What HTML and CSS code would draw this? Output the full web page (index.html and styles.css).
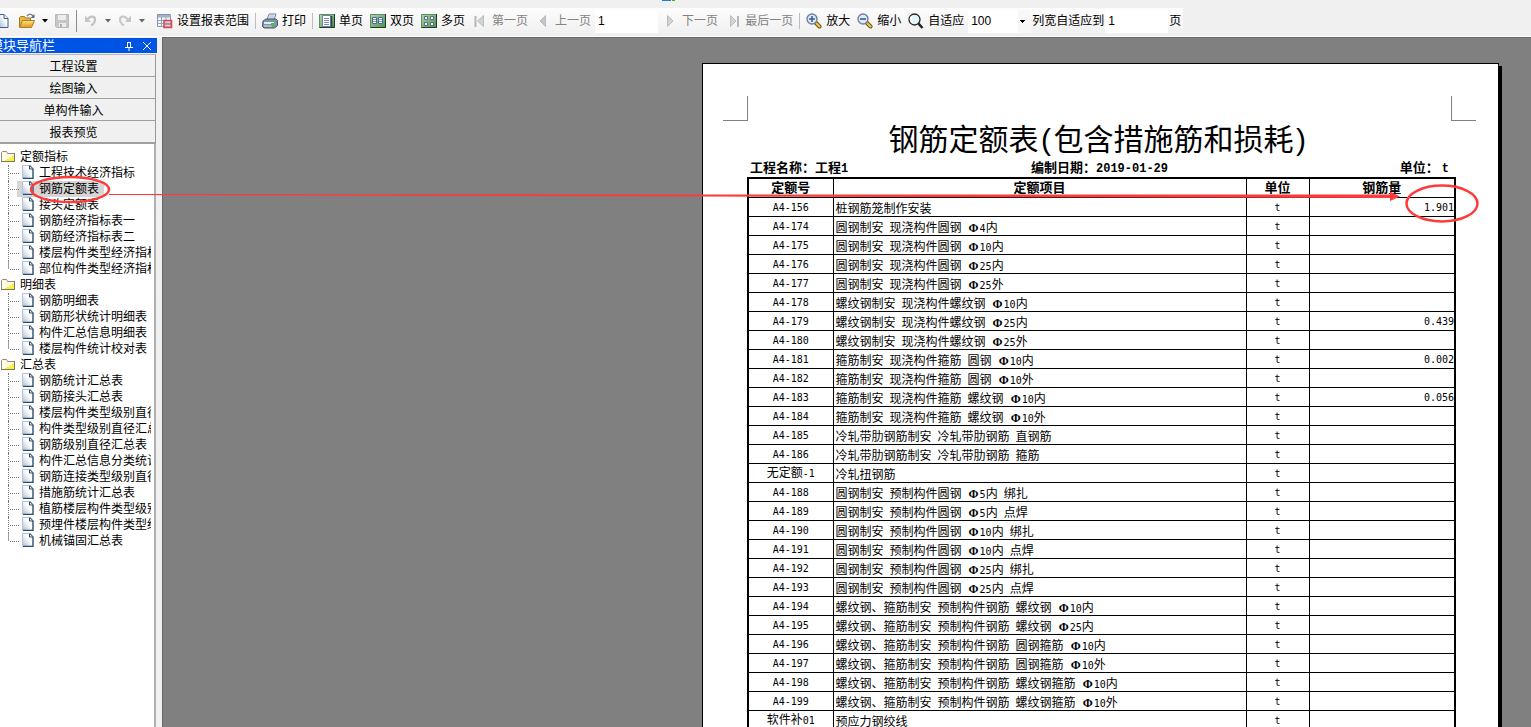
FILE: index.html
```
<!DOCTYPE html>
<html lang="zh-CN">
<head>
<meta charset="utf-8">
<title>报表预览</title>
<link rel="stylesheet" href="styles.css">
</head>
<body>
<svg class="defs" width="0" height="0" aria-hidden="true">
  <defs>
    <linearGradient id="paper" x1="1" y1="0" x2="0" y2="1"><stop offset="0.4" stop-color="#fff"/><stop offset="1" stop-color="#a9bfd9"/></linearGradient>
    <linearGradient id="gold" x1="0" y1="0" x2="0" y2="1"><stop offset="0" stop-color="#fbe08a"/><stop offset="1" stop-color="#dd9a1c"/></linearGradient>
    <linearGradient id="green" x1="0" y1="0" x2="1" y2="1"><stop offset="0" stop-color="#b3d6ac"/><stop offset="1" stop-color="#4c8f4c"/></linearGradient>
    <symbol id="file" viewBox="0 0 12 14"><path d="M.5.5h7l3 3v10H.5z" fill="url(#paper)"/><path d="M.5 13V.5h7" fill="none" stroke="#b4c2d6"/><path d="M7.500.5l3.500 3.500v9.500H1" fill="none" stroke="#2f4c6b" stroke-width="1.400"/><path d="M7.500 1v3H11" fill="#dce7f3" stroke="#2f4c6b"/></symbol>
    <symbol id="folder" viewBox="0 0 16 14"><path d="M1.500 12.500v-9l1-1h4l1 2h7v8z" fill="#fffde8" stroke="#8b8b8b"/><path d="M14 6v6H4z" fill="#ffef28"/><path d="M5 10l1 1m1-3l3 3m-1-4l4 4" stroke="#fff" stroke-dasharray="1 1"/><path d="M1 12.500h14M14.500 4v9" stroke="#77776a"/></symbol>
    <symbol id="lens" viewBox="0 0 16 16"><path d="M9.500 9.500l4 4" stroke="#58481f" stroke-width="4" stroke-linecap="round"/><path d="M10.500 10.500l3 3" stroke="#f0c33e" stroke-width="2.400" stroke-linecap="round"/><circle cx="6" cy="6" r="5" fill="#dcecff" stroke="#747f93" stroke-width="1.400"/></symbol>
  </defs>
</svg>

<header class="toolbar">
  <div class="bar bar-file">
    <button class="tool" aria-label="新建"><svg width="12" height="16"><path d="M0 1.500h4l4 4v9H0" fill="url(#paper)" stroke="#405f86"/><path d="M4 1.500v4h4" fill="#e8f0fa" stroke="#405f86"/></svg></button>
    <button class="tool" aria-label="打开"><svg width="18" height="16"><path d="M1.500 14V4.500l1-1h4l1 1.500h5V8" fill="#e7b54a" stroke="#a87924"/><path d="M1.500 14.500l3-7h12l-3 7z" fill="url(#gold)" stroke="#b57c18"/><path d="M9 3c2-2.500 4-2.500 6 0" fill="none" stroke="#71849c" stroke-width="1.400"/><path d="M16.500 1v4h-4z" fill="#586f8f"/></svg></button>
    <button class="tool" aria-label="打开选项"><svg width="6" height="4"><path d="M0 0h6L3 3.500z"/></svg></button>
    <button class="tool" aria-label="保存" disabled><svg width="16" height="16"><path d="M1.500 1.500h13v13h-12l-1-1z" fill="#c6c6c6" stroke="#b9b9b9"/><path d="M4 2h8v5H4zM5 10h7v4H5z" fill="#ececec"/><path d="M6 11h2v3H6z" fill="#b0b0b0"/></svg></button>
    <span class="sep sep-tall"></span>
    <button class="tool" aria-label="撤销" disabled><svg width="16" height="16"><path d="M4 7c3-5 8-4 8-.5 0 2.500-1.500 4.500-4 6" fill="none" stroke="#c4c4c4" stroke-width="2.200"/><path d="M2 2.500v6.500h6z" fill="#c6c6c6"/></svg></button>
    <button class="tool" aria-label="撤销选项"><svg width="6" height="4"><path d="M0 0h6L3 3.500z" fill="#666"/></svg></button>
    <button class="tool" aria-label="重做" disabled><svg width="16" height="16"><path d="M11 7C8 2 3 3 3 6.500 3 9 4.500 11 7 12.500" fill="none" stroke="#cacaca" stroke-width="2.200"/><path d="M14 2.500V9H8z" fill="#c6c6c6"/></svg></button>
    <button class="tool" aria-label="重做选项"><svg width="6" height="4"><path d="M0 0h6L3 3.500z" fill="#666"/></svg></button>
  </div>
  <div class="bar bar-report">
    <button class="tool labelled"><svg width="16" height="16"><path d="M.5 1.500h13v12H.5z" fill="#f2f6fb" stroke="#8895a8"/><path d="M1 2h12.500v2.500H1z" fill="#9fb2cc"/><path d="M1 7.500h12M1 10.500h12M4.500 4v10M9 4v10" stroke="#94a5bb"/><path d="M7 7.500h7.500v7H7z" fill="#b9c8df" fill-opacity=".7" stroke="#d94a4a" stroke-width="1.600"/><path d="M8 11h6" stroke="#d94a4a"/></svg>设置报表范围</button>
    <span class="sep"></span>
    <button class="tool labelled"><svg width="16" height="16"><path d="M5 7l2-6h7l-2 6z" fill="#f5f9ff" stroke="#6d7f97"/><path d="M7.500 3h5m-5.500 2h5" stroke="#9aacc3"/><path d="M1 8l3-2h10l1.500 1.500v5l-3 2.500H2l-1.500-1.500z" fill="#8293a8" stroke="#44566c"/><path d="M2 9h10v2H2z" fill="#e5ebf2"/><path d="M2 13h8" stroke="#dfe6ee"/><path d="M9 10h3v3H9z" fill="#35cf35"/></svg>打印</button>
    <span class="sep"></span>
    <button class="tool labelled"><svg width="16" height="16"><path d="M.5 1.500h15v13H.5z" fill="url(#green)" stroke="#5d8f66"/><path d="M15.500 1v13.500H.5" fill="none" stroke="#1d3d2a"/><path d="M3.500 2.500h8v11h-8z" fill="#fff" stroke="#6f839b"/><path d="M5 5.500h5M5 7.500h5M5 9.500h5M5 11.500h5" stroke="#7788bd"/><path d="M12.500 3v11" stroke="#284557" stroke-width="1.500"/></svg>单页</button>
    <button class="tool labelled"><svg width="16" height="16"><path d="M.5 1.500h15v13H.5z" fill="url(#green)" stroke="#5d8f66"/><path d="M15.500 1v13.500H.5" fill="none" stroke="#1d3d2a"/><path d="M2.500 4.500h4v6h-4zM8.500 4.500h4v6h-4z" fill="#fff" stroke="#47679a"/><path d="M3 6.500h3m-3 2h3m3-2h3m-3 2h3" stroke="#7c93bc"/></svg>双页</button>
    <button class="tool labelled"><svg width="16" height="16"><path d="M.5 1.500h15v13H.5z" fill="url(#green)" stroke="#5d8f66"/><path d="M15.500 1v13.500H.5" fill="none" stroke="#1d3d2a"/><path d="M3.500 3.500h3v3h-3zM9.500 3.500h3v3h-3zM3.500 9.500h3v3h-3zM9.500 9.500h3v3h-3z" fill="#fff" stroke="#526d83"/></svg>多页</button>
    <button class="tool labelled" disabled><svg width="16" height="16"><path d="M3.500 3v11" stroke="#b7b7b7" stroke-width="2"/><path d="M11.500 2.500v11L5.500 8z" fill="#d3d3d3" stroke="#bcbcbc"/></svg>第一页</button>
    <button class="tool labelled" disabled><svg width="16" height="16"><path d="M10.500 2.500v11L5 8z" fill="#c5c5c5" stroke="#bcbcbc"/></svg>上一页</button>
    <input class="field" type="text" value="1" aria-label="当前页">
    <button class="tool labelled" disabled><svg width="16" height="16"><path d="M5.500 2.500v11L11 8z" fill="#d3d3d3" stroke="#bcbcbc"/></svg>下一页</button>
    <button class="tool labelled" disabled><svg width="16" height="16"><path d="M5.500 2.500v11L11 8z" fill="#d3d3d3" stroke="#bcbcbc"/><path d="M13 3v11" stroke="#b7b7b7" stroke-width="2"/></svg>最后一页</button>
    <span class="sep"></span>
    <button class="tool labelled"><svg width="16" height="16"><use href="#lens"/><path d="M3 6h6M6 3v6" stroke="#3c5e98" stroke-width="1.600"/></svg>放大</button>
    <button class="tool labelled"><svg width="16" height="16"><use href="#lens"/><path d="M3 6h6" stroke="#3c5e98" stroke-width="1.600"/></svg>缩小</button>
    <button class="tool labelled"><svg width="16" height="16"><path d="M10 10l4.500 5" stroke="#222" stroke-width="2.600"/><circle cx="6.500" cy="6.500" r="5.500" fill="#e2f4fc" stroke="#222" stroke-width="1.300"/><path d="M4 3.500c-2 2-1.500 4 0 6" stroke="#fff" stroke-width="2" fill="none"/></svg>自适应</button>
    <select class="field zoom" aria-label="缩放比例"><option>100</option></select>
    <label for="fit">列宽自适应到</label>
    <input class="field" id="fit" type="text" value="1">
    <label for="fit">页</label>
  </div>
</header>

<div class="workspace">
  <aside class="sidebar">
    <div class="side-title">
      <span class="side-name">模块导航栏</span>
      <button class="tool" aria-label="固定"><svg width="10" height="10"><path d="M3.500 1v5M3 1.500h4M6.500 1v5M1 6.500h8M5 7v3" stroke="#fff" fill="none"/></svg></button>
      <button class="tool" aria-label="关闭"><svg width="10" height="10"><path d="M1 1l8 8M9 1L1 9" stroke="#fff"/></svg></button>
    </div>
    <nav class="modules">
      <button>工程设置</button>
      <button>绘图输入</button>
      <button>单构件输入</button>
      <button>报表预览</button>
    </nav>
    <div class="tree">
      <div class="folder"><svg width="16" height="14"><use href="#folder"/></svg>定额指标</div>
      <ul>
        <li><a href="#"><svg width="12" height="14"><use href="#file"/></svg><span>工程技术经济指标</span></a></li>
        <li class="selected"><a href="#"><svg width="12" height="14"><use href="#file"/></svg><span>钢筋定额表</span></a></li>
        <li><a href="#"><svg width="12" height="14"><use href="#file"/></svg><span>接头定额表</span></a></li>
        <li><a href="#"><svg width="12" height="14"><use href="#file"/></svg><span>钢筋经济指标表一</span></a></li>
        <li><a href="#"><svg width="12" height="14"><use href="#file"/></svg><span>钢筋经济指标表二</span></a></li>
        <li><a href="#"><svg width="12" height="14"><use href="#file"/></svg><span>楼层构件类型经济指标</span></a></li>
        <li><a href="#"><svg width="12" height="14"><use href="#file"/></svg><span>部位构件类型经济指标</span></a></li>
      </ul>
      <div class="folder"><svg width="16" height="14"><use href="#folder"/></svg>明细表</div>
      <ul>
        <li><a href="#"><svg width="12" height="14"><use href="#file"/></svg><span>钢筋明细表</span></a></li>
        <li><a href="#"><svg width="12" height="14"><use href="#file"/></svg><span>钢筋形状统计明细表</span></a></li>
        <li><a href="#"><svg width="12" height="14"><use href="#file"/></svg><span>构件汇总信息明细表</span></a></li>
        <li><a href="#"><svg width="12" height="14"><use href="#file"/></svg><span>楼层构件统计校对表</span></a></li>
      </ul>
      <div class="folder"><svg width="16" height="14"><use href="#folder"/></svg>汇总表</div>
      <ul>
        <li><a href="#"><svg width="12" height="14"><use href="#file"/></svg><span>钢筋统计汇总表</span></a></li>
        <li><a href="#"><svg width="12" height="14"><use href="#file"/></svg><span>钢筋接头汇总表</span></a></li>
        <li><a href="#"><svg width="12" height="14"><use href="#file"/></svg><span>楼层构件类型级别直径</span></a></li>
        <li><a href="#"><svg width="12" height="14"><use href="#file"/></svg><span>构件类型级别直径汇总</span></a></li>
        <li><a href="#"><svg width="12" height="14"><use href="#file"/></svg><span>钢筋级别直径汇总表</span></a></li>
        <li><a href="#"><svg width="12" height="14"><use href="#file"/></svg><span>构件汇总信息分类统计</span></a></li>
        <li><a href="#"><svg width="12" height="14"><use href="#file"/></svg><span>钢筋连接类型级别直径</span></a></li>
        <li><a href="#"><svg width="12" height="14"><use href="#file"/></svg><span>措施筋统计汇总表</span></a></li>
        <li><a href="#"><svg width="12" height="14"><use href="#file"/></svg><span>植筋楼层构件类型级别</span></a></li>
        <li><a href="#"><svg width="12" height="14"><use href="#file"/></svg><span>预埋件楼层构件类型级</span></a></li>
        <li><a href="#"><svg width="12" height="14"><use href="#file"/></svg><span>机械锚固汇总表</span></a></li>
      </ul>
    </div>
  </aside>

  <main class="preview">
    <article class="page">
      <div class="crops"><span class="crop crop-left"></span><span class="crop crop-right"></span></div>
      <h1>钢筋定额表<span class="paren">(</span>包含措施筋和损耗<span class="paren">)</span></h1>
      <div class="meta"><span>工程名称：工程<span class="latin">1</span></span><span>编制日期：<span class="latin">2019-01-29</span></span><span class="meta-end">单位：<span class="latin unit">t</span></span></div>
      <table>
        <colgroup><col class="c-code"><col><col class="c-unit"><col class="c-qty"></colgroup>
        <thead><tr><th>定额号</th><th>定额项目</th><th>单位</th><th>钢筋量</th></tr></thead>
        <tbody>
          <tr><td>A4-156</td><td>桩钢筋笼制作安装</td><td>t</td><td>1.901</td></tr>
          <tr><td>A4-174</td><td>圆钢制安<i> </i>现浇构件圆钢<i> </i><b>Φ</b><i>4</i>内</td><td>t</td><td></td></tr>
          <tr><td>A4-175</td><td>圆钢制安<i> </i>现浇构件圆钢<i> </i><b>Φ</b><i>10</i>内</td><td>t</td><td></td></tr>
          <tr><td>A4-176</td><td>圆钢制安<i> </i>现浇构件圆钢<i> </i><b>Φ</b><i>25</i>内</td><td>t</td><td></td></tr>
          <tr><td>A4-177</td><td>圆钢制安<i> </i>现浇构件圆钢<i> </i><b>Φ</b><i>25</i>外</td><td>t</td><td></td></tr>
          <tr><td>A4-178</td><td>螺纹钢制安<i> </i>现浇构件螺纹钢<i> </i><b>Φ</b><i>10</i>内</td><td>t</td><td></td></tr>
          <tr><td>A4-179</td><td>螺纹钢制安<i> </i>现浇构件螺纹钢<i> </i><b>Φ</b><i>25</i>内</td><td>t</td><td>0.439</td></tr>
          <tr><td>A4-180</td><td>螺纹钢制安<i> </i>现浇构件螺纹钢<i> </i><b>Φ</b><i>25</i>外</td><td>t</td><td></td></tr>
          <tr><td>A4-181</td><td>箍筋制安<i> </i>现浇构件箍筋<i> </i>圆钢<i> </i><b>Φ</b><i>10</i>内</td><td>t</td><td>0.002</td></tr>
          <tr><td>A4-182</td><td>箍筋制安<i> </i>现浇构件箍筋<i> </i>圆钢<i> </i><b>Φ</b><i>10</i>外</td><td>t</td><td></td></tr>
          <tr><td>A4-183</td><td>箍筋制安<i> </i>现浇构件箍筋<i> </i>螺纹钢<i> </i><b>Φ</b><i>10</i>内</td><td>t</td><td>0.056</td></tr>
          <tr><td>A4-184</td><td>箍筋制安<i> </i>现浇构件箍筋<i> </i>螺纹钢<i> </i><b>Φ</b><i>10</i>外</td><td>t</td><td></td></tr>
          <tr><td>A4-185</td><td>冷轧带肋钢筋制安<i> </i>冷轧带肋钢筋<i> </i>直钢筋</td><td>t</td><td></td></tr>
          <tr><td>A4-186</td><td>冷轧带肋钢筋制安<i> </i>冷轧带肋钢筋<i> </i>箍筋</td><td>t</td><td></td></tr>
          <tr><td><span class="han">无定额</span>-1</td><td>冷轧扭钢筋</td><td>t</td><td></td></tr>
          <tr><td>A4-188</td><td>圆钢制安<i> </i>预制构件圆钢<i> </i><b>Φ</b><i>5</i>内<i> </i>绑扎</td><td>t</td><td></td></tr>
          <tr><td>A4-189</td><td>圆钢制安<i> </i>预制构件圆钢<i> </i><b>Φ</b><i>5</i>内<i> </i>点焊</td><td>t</td><td></td></tr>
          <tr><td>A4-190</td><td>圆钢制安<i> </i>预制构件圆钢<i> </i><b>Φ</b><i>10</i>内<i> </i>绑扎</td><td>t</td><td></td></tr>
          <tr><td>A4-191</td><td>圆钢制安<i> </i>预制构件圆钢<i> </i><b>Φ</b><i>10</i>内<i> </i>点焊</td><td>t</td><td></td></tr>
          <tr><td>A4-192</td><td>圆钢制安<i> </i>预制构件圆钢<i> </i><b>Φ</b><i>25</i>内<i> </i>绑扎</td><td>t</td><td></td></tr>
          <tr><td>A4-193</td><td>圆钢制安<i> </i>预制构件圆钢<i> </i><b>Φ</b><i>25</i>内<i> </i>点焊</td><td>t</td><td></td></tr>
          <tr><td>A4-194</td><td>螺纹钢、箍筋制安<i> </i>预制构件钢筋<i> </i>螺纹钢<i> </i><b>Φ</b><i>10</i>内</td><td>t</td><td></td></tr>
          <tr><td>A4-195</td><td>螺纹钢、箍筋制安<i> </i>预制构件钢筋<i> </i>螺纹钢<i> </i><b>Φ</b><i>25</i>内</td><td>t</td><td></td></tr>
          <tr><td>A4-196</td><td>螺纹钢、箍筋制安<i> </i>预制构件钢筋<i> </i>圆钢箍筋<i> </i><b>Φ</b><i>10</i>内</td><td>t</td><td></td></tr>
          <tr><td>A4-197</td><td>螺纹钢、箍筋制安<i> </i>预制构件钢筋<i> </i>圆钢箍筋<i> </i><b>Φ</b><i>10</i>外</td><td>t</td><td></td></tr>
          <tr><td>A4-198</td><td>螺纹钢、箍筋制安<i> </i>预制构件钢筋<i> </i>螺纹钢箍筋<i> </i><b>Φ</b><i>10</i>内</td><td>t</td><td></td></tr>
          <tr><td>A4-199</td><td>螺纹钢、箍筋制安<i> </i>预制构件钢筋<i> </i>螺纹钢箍筋<i> </i><b>Φ</b><i>10</i>外</td><td>t</td><td></td></tr>
          <tr><td><span class="han">软件补</span>01</td><td>预应力钢绞线</td><td>t</td><td></td></tr>
        </tbody>
      </table>
    </article>
  </main>
</div>

<svg class="marks" viewBox="0 0 1531 727" aria-hidden="true">
  <path d="M662 0h9v1h-9z" fill="#1d7fc4"/><path d="M672 0h3v1h-3z" fill="#4da52f"/>
  <g fill="none" stroke="#fd3b3b" stroke-width="2.500"><ellipse cx="70" cy="189.500" rx="39" ry="12.500"/><ellipse cx="1442" cy="203.500" rx="35.500" ry="18"/></g>
  <path d="M109 194L700 194.500 1390 194.500V191.500L1400 196.500 1390 201V198L700 196.500 109 195z" fill="#fd3b3b"/>
</svg>
</body>
</html>
```
FILE: styles.css
```
* { box-sizing: border-box; }

body {
  margin: 0;
  height: 100vh;
  display: flex;
  flex-direction: column;
  overflow: hidden;
  background: #f0f0f0;
  color: #000;
  font: 12px/16px "Liberation Sans", "Noto Sans CJK SC", sans-serif;
}

svg { display: block; flex: none; }
.defs { position: absolute; }

button, input, select { font: inherit; color: inherit; border: 0; border-radius: 0; margin: 0; }

/* toolbar */
.toolbar {
  flex: none;
  display: flex;
  padding-top: 8px;
  height: 37px;
  border-bottom: 1px solid #fff;
  white-space: nowrap;
}
.bar {
  display: flex;
  align-items: center;
  padding-bottom: 2px;
  background: linear-gradient(#fdfdfd, #efefef);
}
.bar-file { gap: 6px; width: 153px; }
.bar-report { gap: 1px; padding-left: 1px; padding-right: 2px; }
.tool { display: flex; align-items: center; padding: 0; background: none; }
.tool:disabled { color: #838383; }
.labelled { gap: 4px; padding: 0 3px; }
.sep { width: 1px; height: 16px; margin: 0 2px; background: #bdbdbd; }
.sep-tall { height: 22px; margin: 0; background: #8d8d8d; }
.field { width: 63px; height: 23px; padding: 0 3px; background: #fff; }
.zoom {
  appearance: none;
  background:
    linear-gradient(#000, #000) 52px 10px / 5px 1px no-repeat,
    linear-gradient(#000, #000) 53px 11px / 3px 1px no-repeat,
    linear-gradient(#000, #000) 54px 12px / 1px 1px no-repeat,
    linear-gradient(90deg, #fff 50px, #f8f8f8 50px);
}

/* workspace */
.workspace { flex: 1; min-height: 0; display: flex; }
.sidebar {
  flex: none;
  width: 157px;
  display: flex;
  flex-direction: column;
  padding-top: 1px;
}
.side-title {
  display: flex;
  align-items: center;
  gap: 8px;
  height: 15px;
  padding-right: 5px;
  overflow: hidden;
  background: #0054e3;
  color: #fff;
  font-size: 13px;
  line-height: 15px;
}
.side-name { flex: 1; margin-left: -10px; }
.modules {
  display: flex;
  flex-direction: column;
  margin: 1px 1px 0 0;
  border-top: 1px solid #b8b8b8;
  border-right: 1px solid #999;
}
.modules button {
  height: 22px;
  padding: 2px 8px 0 0;
  border-bottom: 1px solid #a0a0a0;
  background: #f0f0f0;
}
.tree {
  flex: 1;
  margin-right: 1px;
  padding: 5px 3px 0 0;
  border-right: 2px solid #b0b0b0;
  border-top: 1px solid #a0a0a0;
  background: #fff;
  overflow: hidden;
  white-space: nowrap;
}
.tree ul { margin: 0; padding: 0 0 0 8px; list-style: none; overflow: hidden; }
.tree svg { margin-bottom: 2px; }
.folder { display: flex; align-items: center; gap: 4px; height: 16px; }
.tree li { height: 16px; border-left: 1px dotted #777; }
.tree li:last-child { border-image: linear-gradient(#999 50%, transparent 50%) 1; }
.tree a { display: flex; align-items: center; height: 16px; color: #000; text-decoration: none; }
.tree a::before { content: ""; flex: none; width: 9px; margin: 0 3px 0 1px; border-top: 1px dotted #777; }
.tree a span { padding-left: 5px; }
.tree .selected a {
  width: fit-content;
  padding-right: 5px;
  background: linear-gradient(90deg, transparent 8px, #d6d6d6 8px);
}

/* report page */
.preview {
  flex: 1;
  min-width: 0;
  display: flex;
  justify-content: flex-end;
  align-items: flex-start;
  margin-left: 5px;
  padding: 25px 32px 0 0;
  border: solid #696969;
  border-width: 1px 0 0 1px;
  background: #808080;
  overflow: hidden;
}
.page {
  flex: none;
  width: 797px;
  min-height: 1100px;
  padding: 32px 42px 0 44px;
  border: 1px solid #000;
  background: #fff;
  box-shadow: 3px 3px 0 #000;
}
.crops { display: flex; justify-content: space-between; margin: 0 -20px 0 -24px; }
.crop { width: 25px; height: 25px; border: solid #808080; border-width: 0 1px 1px 0; }
.crop-right { border-width: 0 0 1px 1px; }
h1 { margin: 0 0 0 -6px; font-size: 30px; font-weight: 400; line-height: 38px; text-align: center; }
.paren { display: inline-block; width: 15px; text-align: center; }
.meta {
  display: grid;
  grid-template-columns: 1fr auto 1fr;
  padding: 0 7px 0 3px;
  font-size: 13px;
  font-weight: bold;
  line-height: 18px;
}
.meta-end { text-align: right; }
.latin { font: bold 12px/16px "Liberation Mono", monospace; }
.unit { padding-left: 3px; }

table { width: 100%; table-layout: fixed; border-collapse: collapse; border: 2px solid #000; }
.c-code { width: 85px; }
.c-unit { width: 63px; }
.c-qty { width: 146px; }
tr { height: 19px; }
th, td { padding: 0; border: 1px solid #000; line-height: 18px; text-align: center; white-space: nowrap; }
th { font-size: 13px; }
td {
  padding-top: 2px;
  font-family: "DejaVu Sans Mono", "Noto Sans CJK SC", monospace;
  font-size: 10px;
  line-height: 16px;
}
td:nth-child(2) { padding-left: 2px; font-size: 12px; text-align: left; font-family: "Noto Sans CJK SC", sans-serif; }
td:last-child { text-align: right; }
td i { font: 10px/12px "DejaVu Sans Mono", monospace; }
td b { display: inline-block; width: 12px; font: bold 12px/12px "Liberation Serif", serif; text-align: center; }
.han { font-size: 12px; line-height: 12px; }

/* red pen marks over the window */
.marks { position: absolute; top: 0; left: 0; width: 100%; pointer-events: none; }
```
